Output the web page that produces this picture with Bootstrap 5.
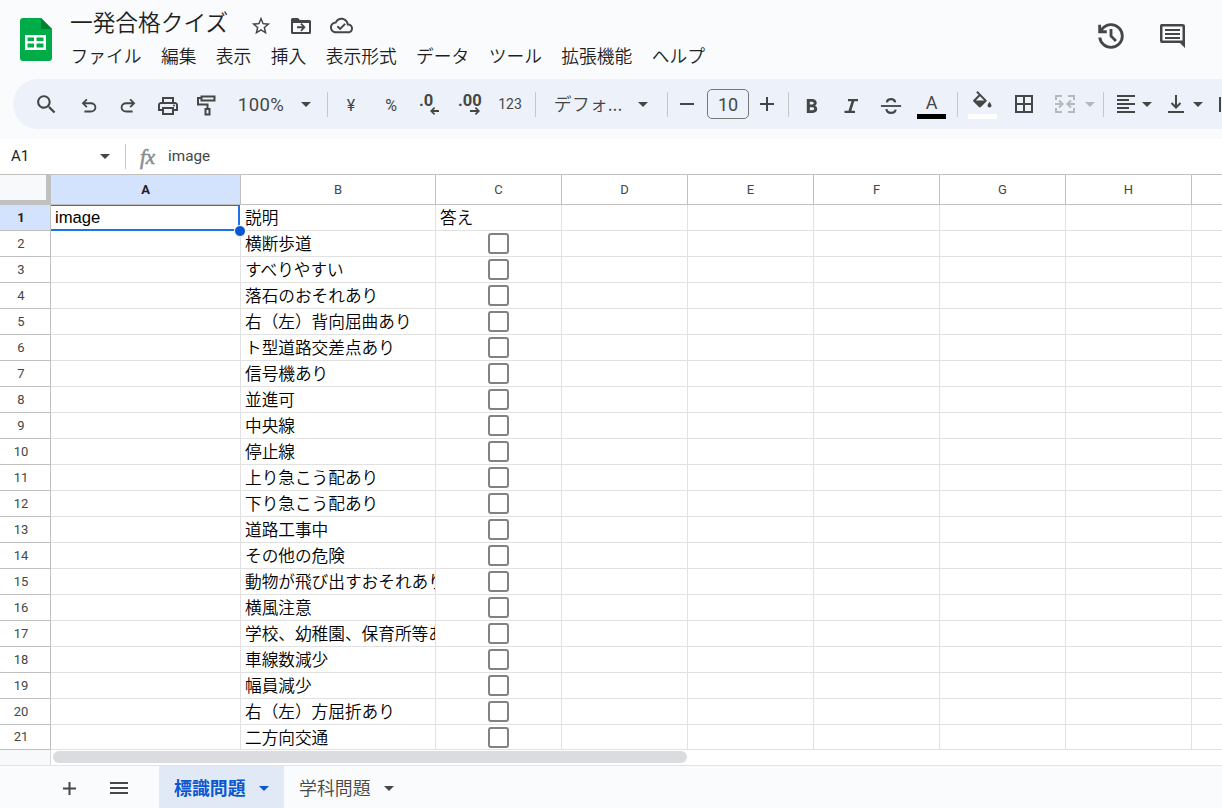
<!DOCTYPE html>
<html lang="ja">
<head>
<meta charset="utf-8">
<title>一発合格クイズ</title>
<link href="https://cdn.jsdelivr.net/npm/bootstrap@5.3.0/dist/css/bootstrap.min.css" rel="stylesheet">
<style>
body{font-family:Roboto,"Noto Sans CJK JP",sans-serif;background:#f9fbfd;color:#1f1f1f;width:1222px;height:808px;overflow:hidden;line-height:1}
svg{display:block;flex:none;fill:#444746}
.jp{font-family:"Noto Sans CJK JP",sans-serif;font-weight:350}
.topbar{height:79px}
.logo{padding:18px 0 0 20px;width:70px}
.doc-title{font-size:22.7px;line-height:26px;margin-top:9px;height:31px}
.title-icons{gap:18px;padding:11px 0 0 22px}
.menus{gap:19.4px;font-size:17.75px;line-height:30px;padding-left:.5px}
.actions{padding:19px 34px 0 0;gap:28px}
.toolbar{margin-left:13px;height:50px;border-radius:25px 0 0 25px;background:#edf2fa;padding-left:13px;display:grid;justify-items:center;align-items:center;color:#444746;white-space:nowrap;
grid-template-columns:40px 46px 32px 48px 30px 78px 12px 31px 16px 64px 14px 66px 14px 37px 68px 42px 7px 32px 50px 27px 17px 30px 48px 32px 49px 3px 46px 38px 44px 6px 21px 23px 20px 38px 6px 21px}
.vsep{width:1px;height:25px;background:#c7c7c7}
.caret{width:0;height:0;border:5px solid transparent;border-top-color:#444746;border-bottom:0}
.caret.off{border-top-color:#b4b7bb}
.caret.blue{border-top-color:#0b57d0}
.zoom-label{font-size:18.5px;letter-spacing:.4px;padding-top:2px}
.font-label{font-size:18px;padding-bottom:2px}
.size-box{width:42px;height:30px;border:1px solid #747775;border-radius:5px;font-size:18px;padding-top:1px}
.swatch{width:29px;height:5px}
.fbar{margin-top:10px;height:36px;background:#fff;border-bottom:1px solid #c0c0c0}
.name-box{width:126px;height:25px;border-right:1px solid #c7c7c7;margin-top:-1px;padding:1px 15px 0 11px;font-size:15px}
.fx{font:italic 21px/20px "Liberation Serif",serif;-webkit-text-stroke:.6px #8a8d90;color:#8a8d90;width:42px;padding-left:14px}
.fval{font-size:15.3px;color:#444746}
.sheet{height:575px;background:#fff;overflow:hidden}
.hrow{height:30px}.grow{height:26px}
.grow:last-child{height:25px}
.hcell,.gcell,.rnum{flex:none;width:126px;border-right:1px solid #e1e1e1;border-bottom:1px solid #e1e1e1}
.hcell{border-color:#c0c0c0;font-size:13px;color:#444746}
.rnum{width:51px;border-color:#c0c0c0;font-size:13px;color:#444746;padding:0 8px 1px 0}
.c-a{width:190px}.c-b{width:195px}
.corner{flex:none;width:51px;background:#f8f9fa;border-right:5px solid #c0c0c0;border-bottom:5px solid #c0c0c0}
.sel{background:#d3e3fd;color:#1f1f1f;font-weight:700}
.gcell{font-family:"Liberation Sans","Noto Sans CJK JP",sans-serif;font-size:16.67px;color:#000;padding-left:4px;white-space:nowrap;overflow:hidden;line-height:25px}
.gcell.kana{font-family:"Noto Sans CJK JP",sans-serif;font-weight:350;line-height:24px}
.active-cell{overflow:visible;box-shadow:inset 0 1px #1a73e8;border-right:2px solid #1a73e8;border-bottom:2px solid #1a73e8;width:189px;margin-right:1px;position:relative;line-height:26px}
.handle{position:absolute;right:-8px;bottom:-8px;width:12px;height:12px;border-radius:50%;background:#0b57d0;border:1px solid #fff;z-index:2}
.tick{width:21px;height:21px;border:2px solid #828282;border-radius:3px;margin-right:4px}
.scroll-row{height:16px;background:#fff;border-bottom:1px solid #e1e3e6}
.scroll-left{width:51px;border-right:1px solid #d9d9d9;background:#f8f9fa}
.thumb{width:634px;height:12px;border-radius:6px;background:#dadce0;margin:1px 0 0 2px}
.tabs{height:42px;font-size:17.9px;padding:2px 0 0 63px}
.list-btn{margin:0 31px 0 34px}
.tab-on{width:125px;height:42px;margin-top:-2px;padding:2px 0 0 15px;background:#e1e9f7;color:#0b57d0}
.tab-off{padding-left:15px;gap:13px;color:#444746}
</style>
</head>
<body>
<header class="topbar d-flex">
  <div class="logo"><svg width="32" height="43" viewBox="0 0 32 43"><path fill="#00ac47" d="M3 0h18l11 11v29a3 3 0 0 1-3 3H3a3 3 0 0 1-3-3V3a3 3 0 0 1 3-3z"/><path fill="#00832d" d="M21 0l11 11H21z"/><path fill="#fff" fill-rule="evenodd" d="M5 17h21v15H5zm2.500 2.500v3.500h6.500v-3.500zm9 0v3.500h7v-3.500zm-9 6v4h6.500v-4zm9 0v4h7v-4z"/></svg></div>
  <div class="flex-grow-1">
    <div class="d-flex">
      <div class="doc-title jp">一発合格クイズ</div>
      <div class="title-icons d-flex align-items-center">
        <svg width="22" height="22" viewBox="0 0 24 24"><path d="M22 9.240l-7.190-.62L12 2 9.190 8.630 2 9.240l5.460 4.730L5.820 21 12 17.270 18.180 21l-1.630-7.030L22 9.240zM12 15.400l-3.760 2.270 1-4.280-3.320-2.880 4.380-.38L12 6.100l1.710 4.040 4.380.38-3.320 2.880 1 4.280L12 15.400z"/></svg>
        <svg width="22" height="22" viewBox="0 0 22 22"><path d="M1 5.500V4.500Q1 3 2.500 3H8l2 2h9.500Q21 5 21 6.500v11q0 1.500-1.500 1.500h-17Q1 19 1 17.500zM3 8v9h16V8zm7.300 1.200L11.600 8l4 4.300-4 4.200-1.300-1.200 2-2H7v-2h5.300z" fill-rule="evenodd"/></svg>
        <svg width="23" height="23" viewBox="0 0 24 24"><path d="M19.350 10.040C18.670 6.590 15.640 4 12 4 9.110 4 6.600 5.640 5.350 8.040 2.340 8.360 0 10.910 0 14c0 3.310 2.690 6 6 6h13c2.760 0 5-2.240 5-5 0-2.640-2.050-4.780-4.650-4.960zM19 18H6c-2.210 0-4-1.790-4-4 0-2.050 1.530-3.760 3.560-3.970l1.070-.11.5-.95C8.080 7.140 9.940 6 12 6c2.620 0 4.880 1.860 5.390 4.430l.3 1.500 1.530.11c1.560.1 2.780 1.410 2.780 2.960 0 1.650-1.350 3-3 3zM10.500 14.200l-2.100-2.100L7 13.500l3.500 3.500 6-6-1.400-1.400z"/></svg>
      </div>
    </div>
    <nav class="menus d-flex jp"><span>ファイル</span><span>編集</span><span>表示</span><span>挿入</span><span>表示形式</span><span>データ</span><span>ツール</span><span>拡張機能</span><span>ヘルプ</span></nav>
  </div>
  <div class="actions d-flex">
    <svg width="34" height="34" viewBox="0 0 24 24"><path d="M12 21q-3.450 0-6.012-2.287T3.050 13H5.100q.35 2.600 2.313 4.300T12 19q2.925 0 4.963-2.037T19 12t-2.037-4.962T12 5q-1.725 0-3.225.8T6.250 8H9v2H3V4h2v2.350q1.275-1.600 3.113-2.475T12 3q1.875 0 3.513.713t2.850 1.924 1.925 2.850T21 12t-.712 3.513-1.925 2.850-2.850 1.925T12 21m2.800-4.800L11 12.400V7h2v4.600l3.200 3.200z"/></svg>
    <svg width="32" height="32" viewBox="0 0 32 32"><path fill-rule="evenodd" d="M5.500 5h21Q29 5 29 7v22l-5-5H6Q4 24 4 22V7q0-2 1.500-2zM6.500 7.500v14h20v-14zM9 10h15v2H9zm0 4h15v2H9zm0 4h15v2H9z"/></svg>
  </div>
</header>

<div class="toolbar">
  <svg width="25" height="25" viewBox="0 0 24 24"><path d="M15.500 14h-.79l-.28-.27C15.410 12.590 16 11.110 16 9.500 16 5.910 13.090 3 9.500 3S3 5.910 3 9.500 5.910 16 9.500 16c1.610 0 3.090-.59 4.230-1.570l.27.28v.79l5 4.990L20.490 19l-4.990-5zm-6 0C7.010 14 5 11.990 5 9.500S7.010 5 9.500 5 14 7.010 14 9.500 11.990 14 9.500 14z"/></svg>
  <svg class="mt-1" width="22" height="22" viewBox="0 0 24 24"><path d="M7 19v-2h7.100q1.575 0 2.738-1T18 13.500 16.838 11 14.100 10H7.800l2.600 2.600L9 14 4 9l5-5 1.400 1.400L7.800 8h6.300q2.425 0 4.163 1.575T20 13.500t-1.737 3.925T14.100 19z"/></svg>
  <svg class="mt-1" width="22" height="22" viewBox="0 0 24 24"><path transform="matrix(-1 0 0 1 24 0)" d="M7 19v-2h7.100q1.575 0 2.738-1T18 13.500 16.838 11 14.100 10H7.800l2.600 2.600L9 14 4 9l5-5 1.400 1.400L7.800 8h6.300q2.425 0 4.163 1.575T20 13.500t-1.737 3.925T14.100 19z"/></svg>
  <svg class="mt-1" width="24" height="24" viewBox="0 0 24 24"><path d="M19 8h-1V3H6v5H5c-1.660 0-3 1.340-3 3v6h4v4h12v-4h4v-6c0-1.660-1.340-3-3-3zM8 5h8v3H8V5zm8 12v2H8v-4h8v2zm2-2v-2H6v2H4v-4c0-.55.45-1 1-1h14c.55 0 1 .45 1 1v4h-2z"/><circle cx="18" cy="11.500" r="1"/></svg>
  <svg class="mt-1" width="22" height="24" viewBox="0 0 22 24"><path fill="none" stroke="#444746" stroke-width="2" d="M5.500 2.500h13v4h-13zM5.500 4H2v6.500h9.500V15M9.500 15h4v5.500h-4z"/></svg>
  <span class="zoom-label">100%</span><i class="caret"></i><i class="vsep"></i>
  <span class="fs-6 pt-1">¥</span><span class="fs-6 pt-1">%</span>
  <svg width="24" height="24" viewBox="0 0 24 24"><text x="1" y="14" font-family="Roboto" font-weight="700" font-size="16.500">.0</text><path d="M12 19l4-4 1.200 1.200L15.400 18H21v2h-5.600l1.800 1.800L16 23z"/></svg>
  <svg width="24" height="24" viewBox="0 0 24 24"><text x="0" y="14" font-family="Roboto" font-weight="700" font-size="16.500">.00</text><path d="M22 19l-4-4-1.200 1.200 1.800 1.800H12v2h6.600l-1.800 1.800L18 23z"/></svg>
  <span class="fw-normal" style="font-size:14px">123</span><i class="vsep"></i>
  <span class="jp font-label">デフォ...</span><i class="caret"></i><i class="vsep"></i>
  <svg width="14" height="14"><path d="M0 6h14v2H0z"/></svg>
  <div class="size-box d-flex align-items-center justify-content-center">10</div>
  <svg width="14" height="14"><path d="M0 6h6V0h2v6h6v2H8v6H6V8H0z"/></svg><i class="vsep"></i>
  <svg class="mt-1" width="24" height="24" viewBox="0 0 24 24"><path d="M6.800 19V5h5.525q1.625 0 3 1T16.700 8.775q0 1.275-.575 1.963t-1.075.987q.625.275 1.388 1.025T17.200 15q0 2.225-1.625 3.113T12.525 19zm3.025-2.800h2.600q1.200 0 1.463-.612t.262-.888-.262-.887-1.538-.613H9.825zm0-5.700h2.325q.825 0 1.200-.425t.375-.95q0-.6-.425-.975t-1.100-.375H9.825z"/></svg>
  <svg class="mt-1" width="24" height="24" viewBox="0 0 24 24"><path d="M5.500 19v-2.300h4l3-9.400H9V5h10v2.300h-3.700l-3 9.400h3.700V19z"/></svg>
  <svg class="mt-1" width="22" height="22" viewBox="0 0 24 24"><path d="M1 11h22v2H1z"/><path fill="none" stroke="#444746" stroke-width="2.500" d="M16.500 8q-.5-3.500-4.500-3.500T7.500 8M7 15.500q.5 4 5 4t5-3.500"/></svg>
  <div class="d-flex flex-column align-items-center pt-1" style="height:29px"><span style="font-size:18px;height:17px;line-height:18px">A</span><i class="swatch bg-black mt-auto"></i></div><i class="vsep"></i>
  <div class="d-flex flex-column align-items-center" style="height:29px"><svg width="24" height="22" viewBox="0 0 24 22"><path d="M7.600 1L6.200 2.400l2.400 2.400-5.200 5.100q-.8.800 0 1.600l5.500 5.500q1 .9 2 0l5.500-5.500q.8-.8 0-1.600zM10 6.300l4.200 4.200H5.800zM19.500 12s-2 2.200-2 3.600a2 2 0 0 0 4 0c0-1.400-2-3.600-2-3.600z"/></svg><i class="swatch bg-white mt-auto"></i></div>
  <svg width="18" height="18"><path fill-rule="evenodd" d="M0 0h18v18H0zm2 2v6h6V2zm8 0v6h6V2zm-8 8v6h6v-6zm8 0v6h6v-6z"/></svg>
  <svg width="20" height="18"><path fill="none" stroke="#b4b7bb" stroke-width="2" d="M7 1H1v4M13 1h6v4M7 17H1v-4M13 17h6v-4M0 9h7M4 5.500L7.500 9 4 12.500M20 9h-7M16 5.500L12.500 9l3.500 3.500"/></svg>
  <i class="caret off"></i><i class="vsep"></i>
  <svg width="18" height="18"><path d="M0 0h18v2H0zm0 4h12v2H0zm0 4h18v2H0zm0 4h12v2H0zm0 4h18v2H0z"/></svg><i class="caret"></i>
  <svg width="16" height="18"><path fill="none" stroke="#444746" stroke-width="2" d="M8 0v12M3.500 8L8 12.500 12.500 8M0 17h16"/></svg><i class="caret"></i>
  <svg class="ms-auto" width="3" height="15"><path d="M0 0h2v15H0z"/></svg>
</div>

<div class="fbar d-flex align-items-center">
  <div class="name-box d-flex align-items-center justify-content-between"><span>A1</span><i class="caret"></i></div>
  <div class="fx">fx</div><span class="fval">image</span>
</div>

<main class="sheet" id="sheet">
  <div class="hrow d-flex" id="heads"><div class="corner"></div></div>
</main>
<div class="scroll-row d-flex"><div class="scroll-left"></div><div class="thumb"></div></div>

<footer class="tabs d-flex align-items-center">
  <svg width="13" height="13"><path d="M0 5.500h5.500V0h2v5.500H13v2H7.500V13h-2V7.500H0z"/></svg>
  <svg class="list-btn" width="18" height="12" shape-rendering="crispEdges"><path d="M0 0h18v2H0zm0 5h18v2H0zm0 5h18v2H0z"/></svg>
  <div class="tab-on jp fw-bold d-flex align-items-center">標識問題<i class="caret blue ms-auto" style="margin-right:15px"></i></div>
  <div class="tab-off jp d-flex align-items-center">学科問題<i class="caret"></i></div>
</footer>

<script src="https://cdn.jsdelivr.net/npm/bootstrap@5.3.0/dist/js/bootstrap.bundle.min.js"></script>
<script>
const labels=['説明','横断歩道','すべりやすい','落石のおそれあり','右（左）背向屈曲あり','ト型道路交差点あり','信号機あり','並進可','中央線','停止線','上り急こう配あり','下り急こう配あり','道路工事中','その他の危険','動物が飛び出すおそれあり','横風注意','学校、幼稚園、保育所等あり','車線数減少','幅員減少','右（左）方屈折あり','二方向交通'];
const heads=document.getElementById('heads'),sheet=document.getElementById('sheet');
heads.innerHTML+=[...'ABCDEFGHI'].map((c,i)=>`<div class="hcell d-flex align-items-center justify-content-center ${['c-a sel','c-b'][i]||''}">${c==='I'?'':c}</div>`).join('');
sheet.innerHTML+=labels.map((t,i)=>`<div class="grow d-flex">
<div class="rnum d-flex align-items-center justify-content-center ${i?'':'sel'}">${i+1}</div>
${i?'<div class="gcell c-a"></div>':'<div class="gcell active-cell">image<span class="handle"></span></div>'}
<div class="gcell kana c-b">${t}</div>
${i?'<div class="gcell d-flex align-items-center justify-content-center"><i class="tick"></i></div>':'<div class="gcell kana">答え</div>'}
${'<div class="gcell"></div>'.repeat(6)}</div>`).join('');
</script>
</body>
</html>
